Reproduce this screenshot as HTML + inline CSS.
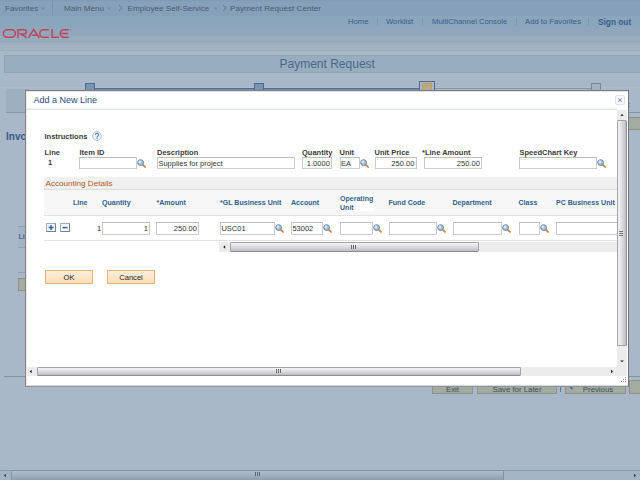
<!DOCTYPE html>
<html><head><meta charset="utf-8">
<style>
html,body{margin:0;padding:0;width:640px;height:480px;overflow:hidden;background:#a8b8c8;font-family:"Liberation Sans",sans-serif;}
.a{position:absolute;}
.t{position:absolute;white-space:nowrap;line-height:1;}
#nav{left:0;top:0;width:640px;height:15.5px;background:linear-gradient(#8199b3 0,#87a1bb 12%,#86a0ba 100%);}
#hdr{left:0;top:15.5px;width:640px;height:35.5px;background:linear-gradient(#8aa6bc 0,#8aa6bc 30%,#8fa6bd 31%,#8fa6bd 57%,#96acbd 58%,#96acbd 77%,#a0b2c2 78%,#a0b2c2 80.5%,#9aaebf 81%,#9aaebf 83%,#a3b3c6 84%,#a3b3c6 88%,#9eb0c0 89%,#9eb0c0 91%,#a4b4c8 92%,#a4b4c8 96.5%,#9bb1b3 97.5%);}
.navt{color:#4a5d70;font-size:8.1px;top:5.2px;}
.lnk{color:#3b5c88;font-size:7.7px;top:18.2px;}
.sep{position:absolute;width:1px;background:#7f98ae;}
#title{left:4px;top:55px;width:640px;height:16px;background:#98aebe;border:1px solid #8fa5b5;border-right:none;}
#dlg{left:25px;top:90px;width:602px;height:295px;background:#fff;border:1px solid #7c7c7e;border-left-color:#878383;border-bottom-color:#8c96a4;border-right-color:#747476;box-shadow:inset 0 1px 0 #e4e4e4,inset 0 -1px 0 #d9d7d3,inset 1px 0 0 #ecebe9;}
.lbl{color:#3a3a3a;font-size:7.5px;font-weight:bold;}
.inp{position:absolute;background:#fff;border:1px solid #cbcbcb;border-top-color:#bdbdbd;box-sizing:border-box;height:12px;font-size:7.5px;color:#333;line-height:11px;padding:0 1.2px 0 0.4px;}
.gh{color:#2f5f8f;font-size:7.05px;font-weight:bold;margin-top:0.4px;}
.mag{position:absolute;width:10px;height:10px;}

.thh{position:absolute;box-sizing:border-box;border:1px solid #a3a3a8;border-bottom-color:#8e8e94;border-radius:1.5px;background:linear-gradient(#f4f4f6 0,#e4e4e8 35%,#cacad0 80%,#b8b8be 100%);}
.thv{position:absolute;box-sizing:border-box;border:1px solid #a3a3a8;border-right-color:#8e8e94;border-radius:1.5px;background:linear-gradient(90deg,#f4f4f6 0,#e4e4e8 35%,#cacad0 80%,#b8b8be 100%);}
.trk{position:absolute;background:#ececec;}
.pm{position:absolute;box-sizing:border-box;width:10px;height:9px;border:1px solid #9fb1bd;border-right-color:#74838e;border-bottom-color:#74838e;background:#f4f7fa;}
</style></head><body>
<svg width="0" height="0" style="position:absolute"><defs><symbol id="mg" viewBox="0 0 10 10"><line x1="5.8" y1="5.9" x2="8.1" y2="7.9" stroke="#d9822e" stroke-width="1.9" stroke-linecap="round"/><circle cx="3.6" cy="3.6" r="2.9" fill="#94c3ef" stroke="#7a838c" stroke-width="1"/><circle cx="2.9" cy="2.9" r="1.3" fill="#d8ecfb"/></symbol></defs></svg>
<!-- background page -->
<div id="nav" class="a"></div>
<div class="t navt" style="left:5px">Favorites</div>
<div class="t navt" style="left:64px">Main Menu</div>
<div class="t navt" style="left:127.5px">Employee Self-Service</div>
<div class="t navt" style="left:230px">Payment Request Center</div>
<div id="hdr" class="a"></div>
<div class="t lnk" style="left:348px">Home</div>
<div class="t lnk" style="left:386px">Worklist</div>
<div class="t lnk" style="left:432px">MultiChannel Console</div>
<div class="t lnk" style="left:525px">Add to Favorites</div>
<div class="t lnk" style="left:598px;font-weight:bold;font-size:8.3px">Sign out</div>
<div class="a" style="left:0;top:51px;width:640px;height:4px;background:#a8b8c8"></div>
<div id="title" class="a"></div>
<div class="t" style="left:279.5px;top:57.5px;font-size:12px;color:#4d6789">Payment Request</div>
<!-- step line -->
<div class="a" style="left:0;top:87px;width:640px;height:1px;background:#afbacb"></div>
<div class="a" style="left:95px;top:88px;width:324px;height:1px;background:#4b6c98"></div>
<div class="a" style="left:95px;top:89px;width:324px;height:1px;background:#7d93ad"></div>
<div class="a" style="left:435px;top:88px;width:156px;height:1px;background:#8394a5"></div>
<div class="a" style="left:85px;top:83px;width:8px;height:6px;background:#7a93af;border:1px solid #4b6c98;border-bottom:none"></div>
<div class="a" style="left:254px;top:83px;width:8px;height:6px;background:#7a93af;border:1px solid #4b6c98;border-bottom:none"></div>
<div class="a" style="left:419px;top:81px;width:13.5px;height:8px;border:1.5px solid #4b6c98;border-bottom:none"></div>
<div class="a" style="left:422px;top:83px;width:8px;height:6px;background:#b2aa8a;border:1.3px solid #c69c50;border-bottom:none"></div>
<div class="a" style="left:591px;top:83px;width:8px;height:6px;background:#a2b2c0;border:1px solid #7a8896;border-bottom:none"></div>

<!-- nav arrows / separators -->
<svg class="a" style="left:39.5px;top:6.5px" width="6" height="4" viewBox="0 0 6 4"><path d="M0.5 0.5H5.5L3 3.2Z" fill="#7790a8"/></svg>
<div class="sep" style="left:52px;top:1px;height:14px;background:#7b94ab"></div>
<svg class="a" style="left:105.5px;top:6.5px" width="6" height="4" viewBox="0 0 6 4"><path d="M0.5 0.5H5.5L3 3.2Z" fill="#7790a8"/></svg>
<svg class="a" style="left:118px;top:4px" width="5" height="8" viewBox="0 0 5 8"><path d="M1 1L4 4L1 7" fill="none" stroke="#5d7187" stroke-width="0.9"/></svg>
<svg class="a" style="left:213px;top:6.5px" width="6" height="4" viewBox="0 0 6 4"><path d="M0.5 0.5H5.5L3 3.2Z" fill="#7790a8"/></svg>
<svg class="a" style="left:222px;top:4px" width="5" height="8" viewBox="0 0 5 8"><path d="M1 1L4 4L1 7" fill="none" stroke="#5d7187" stroke-width="0.9"/></svg>
<div class="sep" style="left:377px;top:18px;height:8px"></div>
<div class="sep" style="left:422px;top:18px;height:8px"></div>
<div class="sep" style="left:516px;top:18px;height:8px"></div>
<div class="sep" style="left:588px;top:18px;height:8px"></div>
<!-- ORACLE -->
<svg class="a" style="left:0;top:26px" width="72" height="14" viewBox="0 26 72 14">
<g fill="none" stroke="#c0465a" stroke-width="1.5">
<rect x="3.35" y="29.75" width="12" height="7.5" rx="3.75" ry="3.75"/>
<path d="M17.95 38V29.75H24.2A2.1 2.1 0 0 1 24.2 33.95H20.8L26.6 37.6"/>
<path d="M28.4 38L33.6 29.4L39.4 38M32.2 35.3H37.6"/>
<path d="M48.9 29.75H43.5A3.75 3.75 0 0 0 43.5 37.25H48.9"/>
<path d="M52.05 29V37.25H59"/>
<path d="M68.8 29.75H64A3.75 3.75 0 0 0 64 37.25H68.8M61.3 33.5H68"/>
</g>
<circle cx="70.6" cy="29.8" r="0.6" fill="#c0465a"/>
</svg>
<!-- left page stuff -->
<div class="a" style="left:6px;top:112px;width:20px;height:1px;background:#8798a9"></div>
<div class="t" style="left:6px;top:132px;font-size:10px;font-weight:bold;color:#3a5b88">Invoice</div>
<div class="a" style="left:18px;top:226px;width:10px;height:1px;background:#8f9fb0"></div>
<div class="a" style="left:18px;top:227px;width:10px;height:20px;background:#a3b4c2"></div>
<div class="t" style="left:18.5px;top:234px;font-size:6.9px;font-weight:bold;color:#3f65a0">Line</div>
<div class="a" style="left:18px;top:247px;width:10px;height:1px;background:#8f9fb0"></div>
<div class="a" style="left:18px;top:272px;width:10px;height:1px;background:#8f9fb0"></div>
<div class="a" style="left:18px;top:278px;width:10px;height:13px;background:#a4ab9f;border:1px solid #958f85;box-sizing:border-box"></div>
<div class="a" style="left:4px;top:376px;width:22px;height:1px;background:#7f93a5"></div>
<div class="a" style="left:6px;top:89px;width:24px;height:23px;background:#9eafbf"></div>
<!-- right page stuff -->
<div class="t" style="left:627px;top:101px;font-size:8px;font-weight:bold;color:#3d6aa6">t</div>
<div class="a" style="left:620px;top:112px;width:20px;height:1px;background:#8394a5"></div>
<div class="a" style="left:628px;top:117px;width:20px;height:13px;background:#a3aca0;border:1px solid #958f85;box-sizing:border-box"></div>
<div class="a" style="left:620px;top:376px;width:20px;height:1px;background:#7f93a5"></div>
<!-- bottom buttons -->
<div class="a" style="left:432px;top:380px;width:41px;height:14px;background:#a3aca0;border:1px solid #958f85;box-sizing:border-box;font-size:7.8px;color:#404e5f;text-align:center;line-height:9px;padding-top:3.6px">Exit</div>
<div class="a" style="left:477px;top:380px;width:80px;height:14px;background:#a3aca0;border:1px solid #958f85;box-sizing:border-box;font-size:7.8px;color:#404e5f;text-align:center;line-height:9px;padding-top:3.6px">Save for Later</div>
<div class="a" style="left:560px;top:383px;width:1px;height:9px;background:#5a78a0"></div>
<div class="a" style="left:565px;top:380px;width:61px;height:14px;background:#a3aca0;border:1px solid #958f85;box-sizing:border-box;font-size:7.8px;color:#404e5f;text-align:center;line-height:9px;padding-top:3.6px;padding-left:5px">Previous</div>
<svg class="a" style="left:568px;top:385px" width="6" height="7" viewBox="0 0 6 7"><path d="M4.5 0.5L1.5 2.5L4.5 5Z" fill="#3f6aa8"/></svg>
<div class="a" style="left:629px;top:380px;width:20px;height:14px;background:#a3aca0;border:1px solid #958f85;box-sizing:border-box"></div>
<!-- page scrollbar -->
<div class="a" style="left:0;top:470px;width:640px;height:1px;background:#8a9dab"></div>
<div class="a" style="left:0;top:471px;width:640px;height:9px;background:#a4b4c2"></div>
<svg class="a" style="left:0;top:470px" width="11" height="10" viewBox="0 0 11 10"><path d="M3.8 5.5L5.8 3.7V7.3Z" fill="#2f3a45"/></svg>
<div class="a" style="left:11px;top:470px;width:493px;height:11px;box-sizing:border-box;border:1px solid #7f919f;border-radius:1.5px;background:linear-gradient(#aebdca,#a3b3c1 40%,#909fae 100%)"></div>
<svg class="a" style="left:255px;top:472px" width="6" height="5" viewBox="0 0 6 5"><g fill="#5a6772"><rect x="0" y="0" width="1" height="4"/><rect x="2" y="0" width="1" height="4"/><rect x="4" y="0" width="1" height="4"/></g></svg>
<svg class="a" style="left:629px;top:470px" width="11" height="10" viewBox="0 0 11 10"><path d="M5 3.7V7.3L7 5.5Z" fill="#2f3a45"/></svg>
<!-- dialog -->
<div id="dlg" class="a"></div>
<div class="t" style="left:33.5px;top:96.2px;font-size:9px;color:#2b4a80">Add a New Line</div>
<div class="a" style="left:26px;top:108px;width:591px;height:1px;background:#f2f3f3"></div><div class="a" style="left:26px;top:109px;width:591px;height:1px;background:#dfe6e4"></div>

<div class="t lbl" style="left:44.5px;top:132.5px">Instructions</div>
<div class="t lbl" style="left:44.5px;top:149px">Line</div>
<div class="t lbl" style="left:48px;top:159px">1</div>
<div class="t lbl" style="left:79.5px;top:149px">Item ID</div>
<div class="inp" style="left:79px;top:157px;width:58px"></div>
<div class="t lbl" style="left:157px;top:149px">Description</div>
<div class="inp" style="left:157px;top:157px;width:138px">Supplies for project</div>
<div class="t lbl" style="left:302px;top:149px">Quantity</div>
<div class="inp" style="left:302px;top:157px;width:30px;text-align:right">1.0000</div>
<div class="t lbl" style="left:339.5px;top:149px">Unit</div>
<div class="inp" style="left:339.5px;top:157px;width:20px">EA</div>
<div class="t lbl" style="left:374.5px;top:149px">Unit Price</div>
<div class="inp" style="left:374.5px;top:157px;width:42px;text-align:right">250.00</div>
<div class="t lbl" style="left:422px;top:149px">*Line Amount</div>
<div class="inp" style="left:424px;top:157px;width:58px;text-align:right">250.00</div>
<div class="t lbl" style="left:519.5px;top:149px">SpeedChart Key</div>
<div class="inp" style="left:519px;top:157px;width:78px"></div>

<div class="a" style="left:44px;top:177px;width:573px;height:12px;background:#f0f0f0;border-bottom:1px solid #dcdcdc"></div>
<div class="t" style="left:45.5px;top:179.5px;font-size:8.1px;color:#b05a22">Accounting Details</div>
<div class="a" style="left:44px;top:190px;width:573px;height:25px;background:#f7f7f7;border-bottom:1px solid #e2e2e2"></div>
<div class="t gh" style="left:73px;top:199px">Line</div>
<div class="t gh" style="left:102px;top:199px">Quantity</div>
<div class="t gh" style="left:156.5px;top:199px">*Amount</div>
<div class="t gh" style="left:220px;top:199px">*GL Business Unit</div>
<div class="t gh" style="left:291px;top:199px">Account</div>
<div class="a" style="left:340px;top:194px;width:34px;height:16.5px;background:#fff"></div><div class="t gh" style="left:340px;top:195px">Operating</div>
<div class="t gh" style="left:340px;top:203.5px">Unit</div>
<div class="t gh" style="left:388.5px;top:199px">Fund Code</div>
<div class="t gh" style="left:452.5px;top:199px">Department</div>
<div class="t gh" style="left:518.5px;top:199px">Class</div>
<div class="t gh" style="left:556px;top:199px">PC Business Unit</div>

<div class="a" style="left:44px;top:240px;width:573px;height:1px;background:#e2e2e2"></div>
<div class="t" style="left:97px;top:224.6px;font-size:7.8px;color:#333">1</div>
<div class="inp" style="left:102px;top:222px;width:48px;height:13px;line-height:12px;text-align:right">1</div>
<div class="inp" style="left:156px;top:222px;width:43px;height:13px;line-height:12px;text-align:right">250.00</div>
<div class="inp" style="left:220px;top:222px;width:55px;height:13px;line-height:12px">USC01</div>
<div class="inp" style="left:291px;top:222px;width:32px;height:13px;line-height:12px">53002</div>
<div class="inp" style="left:340px;top:222px;width:33px;height:13px;line-height:12px"></div>
<div class="inp" style="left:388.5px;top:222px;width:48px;height:13px;line-height:12px"></div>
<div class="inp" style="left:452.5px;top:222px;width:49px;height:13px;line-height:12px"></div>
<div class="inp" style="left:518.5px;top:222px;width:21px;height:13px;line-height:12px"></div>
<div class="inp" style="left:556px;top:222px;width:66px;height:13px;line-height:12px"></div>

<svg class="mag" style="left:137.3px;top:158.8px" viewBox="0 0 10 10"><use href="#mg"/></svg>
<svg class="mag" style="left:360px;top:158.8px" viewBox="0 0 10 10"><use href="#mg"/></svg>
<svg class="mag" style="left:597.3px;top:158.8px" viewBox="0 0 10 10"><use href="#mg"/></svg>
<svg class="mag" style="left:275.3px;top:223.8px" viewBox="0 0 10 10"><use href="#mg"/></svg>
<svg class="mag" style="left:323.3px;top:223.8px" viewBox="0 0 10 10"><use href="#mg"/></svg>
<svg class="mag" style="left:373.3px;top:223.8px" viewBox="0 0 10 10"><use href="#mg"/></svg>
<svg class="mag" style="left:437px;top:223.8px" viewBox="0 0 10 10"><use href="#mg"/></svg>
<svg class="mag" style="left:502px;top:223.8px" viewBox="0 0 10 10"><use href="#mg"/></svg>
<svg class="mag" style="left:539.8px;top:223.8px" viewBox="0 0 10 10"><use href="#mg"/></svg>

<!-- help icon -->
<svg class="a" style="left:92px;top:131px" width="10" height="10" viewBox="0 0 10 10"><circle cx="5" cy="5" r="4.4" fill="#f2f6fb" stroke="#aec4e2" stroke-width="1"/><path d="M3.4 4A1.6 1.5 0 1 1 5.6 5.2C5.1 5.5 5 5.8 5 6.5" fill="none" stroke="#5a8cc8" stroke-width="1.15"/><rect x="4.4" y="7.1" width="1.2" height="1.1" fill="#5a8cc8"/></svg>
<!-- close -->
<div class="a" style="left:615px;top:95px;width:8px;height:8px;border:1px solid #e2e2e2;border-radius:2px;background:#f7f7f7"></div>
<svg class="a" style="left:615px;top:95px" width="10" height="10" viewBox="0 0 10 10"><path d="M3.1 3.3L6.9 6.9M6.9 3.3L3.1 6.9" stroke="#7489a0" stroke-width="0.95"/></svg>
<!-- plus minus -->
<div class="pm" style="left:46px;top:223px"></div>
<svg class="a" style="left:46px;top:223px" width="10" height="9" viewBox="0 0 10 9"><path d="M2.6 4.6H7.6M5.1 2.1V7.1" stroke="#2a66b4" stroke-width="1.5"/></svg>
<div class="pm" style="left:60px;top:223px"></div>
<svg class="a" style="left:60px;top:223px" width="10" height="9" viewBox="0 0 10 9"><path d="M2.5 4.6H7.5" stroke="#2a66b4" stroke-width="1.5"/></svg>
<!-- grid hscroll -->
<div class="trk" style="left:219px;top:242px;width:398px;height:10px"></div>
<svg class="a" style="left:219px;top:242px" width="11" height="10" viewBox="0 0 11 10"><path d="M4.2 5L6.2 3.2V6.8Z" fill="#1e1e1e"/></svg>
<div class="thh" style="left:230px;top:242px;width:249px;height:10px"></div>
<svg class="a" style="left:351px;top:245px" width="6" height="5" viewBox="0 0 6 5"><g fill="#6a6a6a"><rect x="0" y="0" width="1" height="4"/><rect x="2" y="0" width="1" height="4"/><rect x="4" y="0" width="1" height="4"/></g></svg>
<!-- dialog vscroll -->
<div class="trk" style="left:617px;top:110px;width:10px;height:257px"></div>
<svg class="a" style="left:617px;top:110px" width="10" height="10" viewBox="0 0 10 10"><path d="M3.2 5.8L5 4L6.8 5.8Z" fill="#1e1e1e"/></svg>
<div class="thv" style="left:617px;top:120px;width:10px;height:226px"></div>
<svg class="a" style="left:619px;top:230px" width="5" height="6" viewBox="0 0 5 6"><g fill="#7a7570"><rect x="0" y="1" width="4" height="1"/><rect x="0" y="3" width="4" height="1"/><rect x="0" y="5" width="4" height="1"/></g></svg>
<svg class="a" style="left:617px;top:356px" width="10" height="10" viewBox="0 0 10 10"><path d="M3.2 4.4L5 6.2L6.8 4.4Z" fill="#1e1e1e"/></svg>
<!-- dialog hscroll -->
<div class="trk" style="left:26px;top:367px;width:601px;height:9px"></div>
<svg class="a" style="left:26px;top:367px" width="11" height="9" viewBox="0 0 11 9"><path d="M3.6 4.5L5.6 2.7V6.3Z" fill="#1e1e1e"/></svg>
<div class="thh" style="left:37px;top:367px;width:484px;height:9px"></div>
<svg class="a" style="left:276px;top:369px" width="6" height="5" viewBox="0 0 6 5"><g fill="#6a6a6a"><rect x="0" y="0" width="1" height="4"/><rect x="2" y="0" width="1" height="4"/><rect x="4" y="0" width="1" height="4"/></g></svg>
<svg class="a" style="left:606px;top:367px" width="11" height="9" viewBox="0 0 11 9"><path d="M5 2.7V6.3L7 4.5Z" fill="#1e1e1e"/></svg>
<!-- resize grip -->
<svg class="a" style="left:619px;top:376px" width="9" height="9" viewBox="0 0 9 9"><g fill="#8a8a8a"><rect x="6" y="1" width="1" height="1"/><rect x="4" y="3" width="1" height="1"/><rect x="6" y="3" width="1" height="1"/><rect x="2" y="5" width="1" height="1"/><rect x="4" y="5" width="1" height="1"/><rect x="6" y="5" width="1" height="1"/></g></svg>
<!-- OK / Cancel -->
<div class="a" style="left:45px;top:270px;width:46px;height:12px;border:1px solid #e0b47a;background:linear-gradient(#fdeed8,#f9dfba);font-size:7.6px;color:#1e1e1e;text-align:center;line-height:13.4px">OK</div>
<div class="a" style="left:107px;top:270px;width:46px;height:12px;border:1px solid #e0b47a;background:linear-gradient(#fdeed8,#f9dfba);font-size:7.6px;color:#1e1e1e;text-align:center;line-height:13.4px">Cancel</div>

</body></html>
